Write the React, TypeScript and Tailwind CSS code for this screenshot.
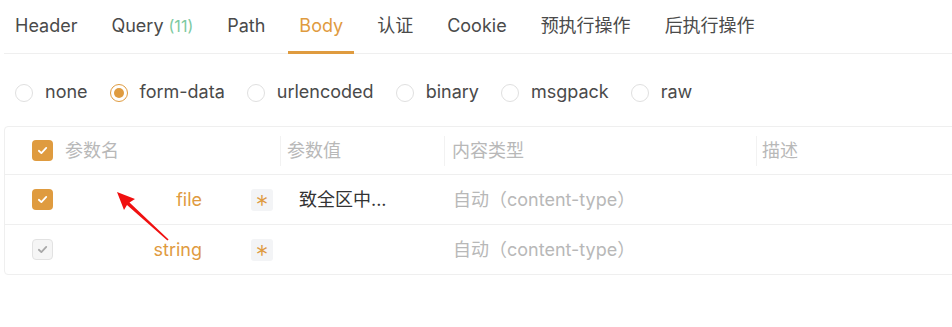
import React from 'react';

const tabs = [
  { label: 'Header' },
  { label: 'Query', count: '(11)' },
  { label: 'Path' },
  { label: 'Body', active: true },
  { label: '认证' },
  { label: 'Cookie' },
  { label: '预执行操作' },
  { label: '后执行操作' },
];

const modes = ['none', 'form-data', 'urlencoded', 'binary', 'msgpack', 'raw'];

function Check({ disabled }: { disabled?: boolean }) {
  return (
    <span
      className={
        disabled
          ? 'flex h-[21px] w-[21px] shrink-0 items-center justify-center rounded-[4px] border border-[#e2e2e2] bg-[#f5f5f5]'
          : 'flex h-[21px] w-[21px] shrink-0 items-center justify-center rounded-[4px] bg-[#df9b3f]'
      }
    >
      <svg width="13" height="13" viewBox="0 0 16 16" fill="none">
        <path
          d="M3.5 8.3 L6.6 11.2 L12.6 4.8"
          stroke={disabled ? '#a8a8a8' : '#fff'}
          strokeWidth="2.2"
          strokeLinecap="round"
          strokeLinejoin="round"
        />
      </svg>
    </span>
  );
}

function Star() {
  return (
    <span className="flex h-[22px] w-[22px] shrink-0 justify-center rounded-[3px] bg-[#f3f4f6] text-[26px] font-light leading-[22px] text-[#df9b3f]">
      <span className="relative top-[5px]">*</span>
    </span>
  );
}

export default function App() {
  return (
    <div
      className="relative h-[327px] w-[952px] overflow-hidden bg-white"
      style={{ fontFamily: 'Inter, "Noto Sans CJK SC", sans-serif' }}
    >
      {/* tabs */}
      <div className="ml-[4px] flex h-[54px] border-b border-[#efefef]">
        {tabs.map((t, i) => (
          <div
            key={i}
            className={
              'relative mr-[12px] flex items-center px-[11px] pb-[2px] text-[18px] ' +
              (t.active ? 'text-[#df9b3f]' : 'text-[#4a4a4a]')
            }
          >
            {t.label}
            {t.count && <span className="ml-[5px] text-[16px] text-[#7cc9a0]">{t.count}</span>}
            {t.active && <span className="absolute bottom-[-1px] left-0 right-0 h-[3px] bg-[#df9b3f]" />}
          </div>
        ))}
      </div>

      {/* body modes */}
      <div className="flex h-[72px] items-center pl-[15px] pt-[5px]">
        {modes.map((m) => (
          <div key={m} className="mr-[22px] flex items-center gap-[12px] text-[18px] text-[#4a4a4a]">
            {m === 'form-data' ? (
              <span className="flex h-[18px] w-[18px] items-center justify-center rounded-full border-[1.5px] border-[#df9b3f]">
                <span className="h-[10px] w-[10px] rounded-full bg-[#df9b3f]" />
              </span>
            ) : (
              <span className="h-[18px] w-[18px] rounded-full border border-[#e0e0e0]" />
            )}
            <span className="pb-[2px]">{m}</span>
          </div>
        ))}
      </div>

      {/* table */}
      <div className="ml-[4px] w-[960px] rounded-[4px] border border-[#efefef] text-[18px]">
        <div className="flex h-[48px] items-center border-b border-[#efefef] text-[#b8b8b8]">
          <div className="flex w-[275px] items-center pl-[27px]">
            <Check />
            <span className="ml-[12px]">参数名</span>
          </div>
          <div className="h-[30px] w-px bg-[#f2f2f2]" />
          <div className="w-[163px] pl-[6px]">参数值</div>
          <div className="h-[30px] w-px bg-[#f2f2f2]" />
          <div className="w-[311px] pl-[7px]">内容类型</div>
          <div className="h-[30px] w-px bg-[#f2f2f2]" />
          <div className="pl-[5px]">描述</div>
        </div>

        <div className="flex h-[50px] items-center border-b border-[#efefef]">
          <div className="flex w-[276px] items-center pl-[27px] pr-[8px]">
            <Check />
            <span className="flex-1 pr-[49px] text-right text-[#df9b3f]">file</span>
            <Star />
          </div>
          <div className="w-[164px] pl-[18px] text-[#333]">致全区中...</div>
          <div className="pl-[8px] text-[#b8b8b8]">自动（content-type）</div>
        </div>

        <div className="flex h-[49px] items-center">
          <div className="flex w-[276px] items-center pl-[27px] pr-[8px]">
            <Check disabled />
            <span className="flex-1 pr-[49px] text-right text-[#df9b3f]">string</span>
            <Star />
          </div>
          <div className="w-[164px] pl-[18px]" />
          <div className="pl-[8px] text-[#b8b8b8]">自动（content-type）</div>
        </div>
      </div>

      {/* red annotation arrow */}
      <svg className="absolute left-0 top-0" width="952" height="327">
        <polygon
          points="117,192 135,199 129.5,202.5 168.6,239.4 167.4,240.6 127,205 124,210"
          fill="#f01010"
        />
      </svg>
    </div>
  );
}
